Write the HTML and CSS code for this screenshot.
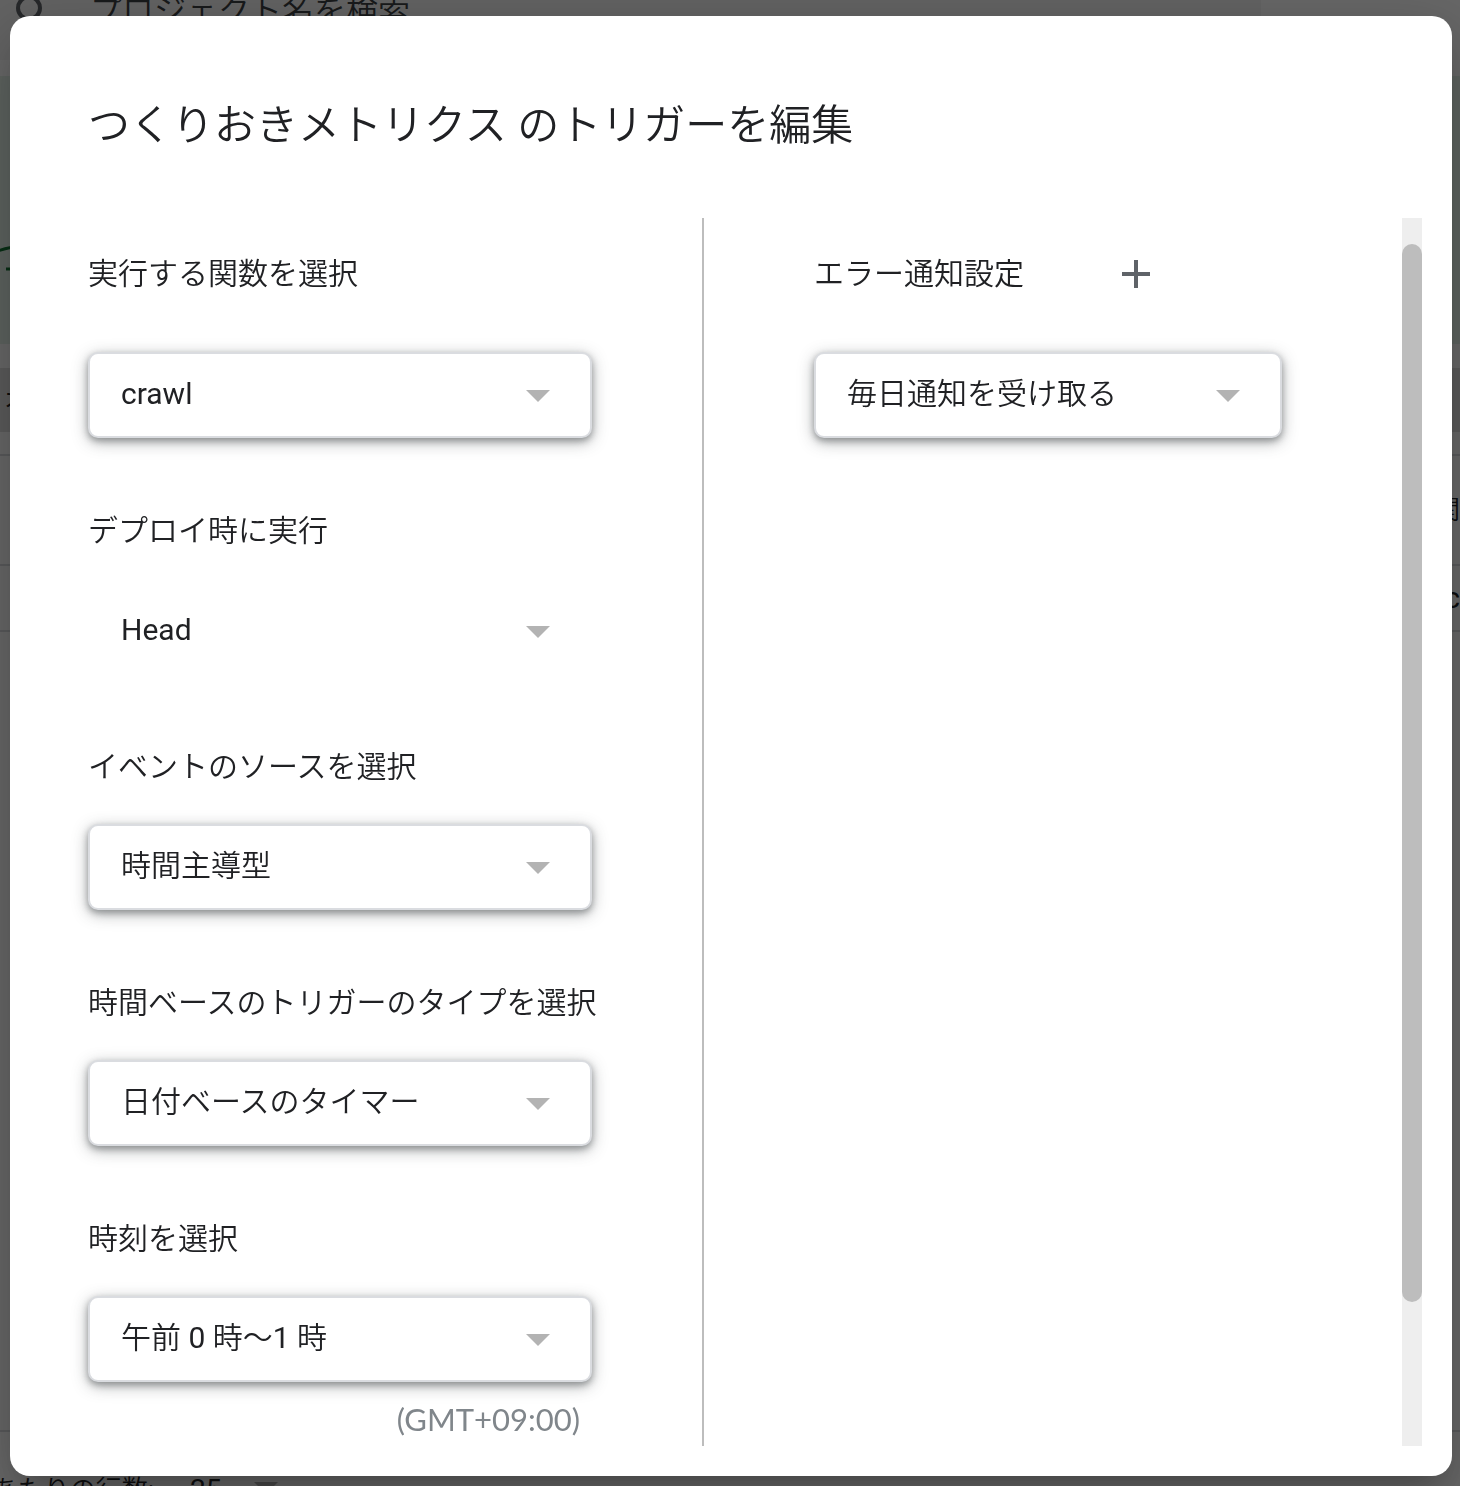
FILE: index.html
```html
<!DOCTYPE html>
<html lang="ja">
<head>
  <meta charset="UTF-8">
  <meta name="viewport" content="width=device-width, initial-scale=1.0">
  <title>トリガーを編集</title>
  <link rel="stylesheet" href="styles.css">
</head>
<body>
  <div class="page">
    <div class="search-bar">
      <svg class="search-icon" viewBox="0 0 32 32"><circle cx="15" cy="13" r="11"/><path d="M23 21l8 8"/></svg>
      <span>プロジェクト名を検索</span>
    </div>
    <div class="banner">
      <svg class="banner-art" viewBox="0 0 40 40"><path d="M-2 15Q8 11 20 11M6 33h14"/></svg>
    </div>
    <div class="filter-bar">オ</div>
    <div class="list">
      <div class="list-row list-head"><span>関</span></div>
      <div class="list-row"><span>c</span></div>
    </div>
    <div class="pager">
      <span class="pager-label">あたりの行数:</span>
      <span class="pager-size">25</span>
      <svg class="arrow" viewBox="0 0 24 12"><path d="M0 0h24L12 12z"/></svg>
    </div>
  </div>

  <div class="overlay">
    <div class="dialog" role="dialog" aria-labelledby="dialog-title">
      <h1 id="dialog-title">つくりおきメトリクス のトリガーを編集</h1>
      <div class="dialog-body">
        <div class="columns">
          <div class="settings">
            <div class="field field-first">
              <label for="function">実行する関数を選択</label>
              <div class="select">
                <select id="function"><option>crawl</option></select>
                <svg class="arrow" viewBox="0 0 24 12"><path d="M0 0h24L12 12z"/></svg>
              </div>
            </div>
            <div class="field">
              <label for="deployment">デプロイ時に実行</label>
              <div class="select select-flat">
                <select id="deployment"><option>Head</option></select>
                <svg class="arrow" viewBox="0 0 24 12"><path d="M0 0h24L12 12z"/></svg>
              </div>
            </div>
            <div class="field">
              <label for="source">イベントのソースを選択</label>
              <div class="select">
                <select id="source"><option>時間主導型</option></select>
                <svg class="arrow" viewBox="0 0 24 12"><path d="M0 0h24L12 12z"/></svg>
              </div>
            </div>
            <div class="field">
              <label for="type">時間ベースのトリガーのタイプを選択</label>
              <div class="select">
                <select id="type"><option>日付ベースのタイマー</option></select>
                <svg class="arrow" viewBox="0 0 24 12"><path d="M0 0h24L12 12z"/></svg>
              </div>
            </div>
            <div class="field">
              <label for="time">時刻を選択</label>
              <div class="select">
                <select id="time"><option>午前 0 時～1 時</option></select>
                <svg class="arrow" viewBox="0 0 24 12"><path d="M0 0h24L12 12z"/></svg>
              </div>
              <p class="timezone">(GMT+09:00)</p>
            </div>
          </div>
          <div class="notice">
            <div class="field field-first">
              <div class="notice-head">
                <label for="notify">エラー通知設定</label>
                <button type="button" class="add" aria-label="追加">
                  <svg viewBox="0 0 24 24"><path d="M11 5h2v6h6v2h-6v6h-2v-6H5v-2h6z"/></svg>
                </button>
              </div>
              <div class="select">
                <select id="notify"><option>毎日通知を受け取る</option></select>
                <svg class="arrow" viewBox="0 0 24 12"><path d="M0 0h24L12 12z"/></svg>
              </div>
            </div>
          </div>
        </div>
        <div class="scroll-track"><div class="scroll-thumb"></div></div>
      </div>
    </div>
  </div>
</body>
</html>
```
FILE: styles.css
```css
* {
  box-sizing: border-box;
}

body {
  margin: 0;
  height: 100vh;
  overflow: hidden;
  font-family: Roboto, "Noto Sans CJK JP DemiLight", "Noto Sans CJK JP", sans-serif;
  font-size: 30px;
  line-height: 40px;
  color: #202124;
  background: #fff;
}

/* 背面のページ */
.page {
  display: flex;
  flex-direction: column;
  height: 100vh;
  overflow: hidden;
  font-size: 26px;
}

.search-bar {
  display: flex;
  align-items: center;
  gap: 44px;
  width: 1261px;
  height: 60px;
  padding: 0 14px 38px;
  background: #f5f5f5;
  font-size: 32px;
  color: #3c4043;
}

.search-icon {
  flex: none;
  width: 32px;
  height: 32px;
  fill: none;
  stroke: #5f6368;
  stroke-width: 4;
}

.banner {
  flex: none;
  height: 268px;
  margin-top: 16px;
  padding-top: 160px;
  background: #e6f4ea;
}

.banner-art {
  display: block;
  width: 40px;
  height: 40px;
  fill: none;
  stroke: #137333;
  stroke-width: 3;
}

.filter-bar {
  flex: none;
  height: 64px;
  margin: 24px 0 22px;
  padding-left: 4px;
  line-height: 64px;
  background: #e0e0e0;
}

.list {
  flex: 1;
}

.list-row {
  display: flex;
  align-items: center;
  justify-content: flex-end;
  height: 68px;
  border-top: 2px solid #dadce0;
  border-bottom: 2px solid #dadce0;
  font-size: 30px;
}

.list-head {
  height: 110px;
  border-bottom: none;
  font-size: 26px;
}

.pager {
  flex: none;
  display: flex;
  align-items: flex-start;
  height: 56px;
  padding-top: 38px;
  border-top: 2px solid #dadce0;
}

.pager-label {
  display: flex;
  justify-content: flex-end;
  width: 154px;
  white-space: nowrap;
}

.pager-size {
  width: 64px;
  margin-left: 36px;
  font-size: 28px;
}

.pager .arrow {
  margin-top: 12px;
}

/* ダイアログ */
.overlay {
  position: fixed;
  inset: 0;
  padding: 16px 8px 10px 10px;
  background: rgba(0, 0, 0, 0.6);
}

.dialog {
  display: flex;
  flex-direction: column;
  height: 100%;
  padding: 80px 30px 30px 78px;
  border-radius: 20px;
  background: #fff;
  box-shadow: 0 22px 30px -14px rgba(0, 0, 0, 0.2), 0 18px 60px 6px rgba(0, 0, 0, 0.2);
}

h1 {
  margin: 0 0 62px;
  font-size: 42px;
  font-weight: 400;
  line-height: 60px;
}

.dialog-body {
  flex: 1;
  display: flex;
  min-height: 0;
}

.columns {
  flex: 1;
  display: grid;
  grid-template-columns: minmax(0, 15fr) minmax(0, 17fr);
}

.settings {
  border-right: 2px solid #bdbdbd;
  padding-right: 110px;
}

.notice {
  padding: 0 120px 0 110px;
}

.field {
  padding-top: 73px;
}

.field-first {
  padding-top: 36px;
}

.field label {
  display: block;
  white-space: nowrap;
}

.select {
  position: relative;
  margin-top: 37px;
}

.field-first .select {
  margin-top: 58px;
}

.select select {
  display: block;
  width: 100%;
  height: 86px;
  padding: 0 80px 2px 31px;
  border: 2px solid #dadce0;
  border-radius: 10px;
  appearance: none;
  background: #fff;
  box-shadow: 0 3px 6px rgba(60, 64, 67, 0.4), 0 4px 16px rgba(60, 64, 67, 0.4);
  font: inherit;
  color: inherit;
}

.select-flat select {
  border-color: transparent;
  box-shadow: none;
}

.arrow {
  width: 24px;
  height: 12px;
  fill: #b3b3b3;
}

.select .arrow {
  position: absolute;
  top: 38px;
  right: 42px;
  pointer-events: none;
}

.timezone {
  margin: 17px 0 0;
  padding-right: 12px;
  font-family: Lato, sans-serif;
  font-size: 31px;
  text-align: right;
  color: #80868b;
}

.notice-head {
  display: flex;
  align-items: center;
  gap: 88px;
  height: 40px;
}

.add {
  flex: none;
  width: 48px;
  height: 48px;
  padding: 0;
  border: none;
  background: none;
  cursor: pointer;
}

.add svg {
  display: block;
  fill: #5f6368;
}

.scroll-track {
  width: 20px;
  padding-top: 26px;
  background: #eee;
}

.scroll-thumb {
  height: 88%;
  border-radius: 10px;
  background: #bdbdbd;
}
```
